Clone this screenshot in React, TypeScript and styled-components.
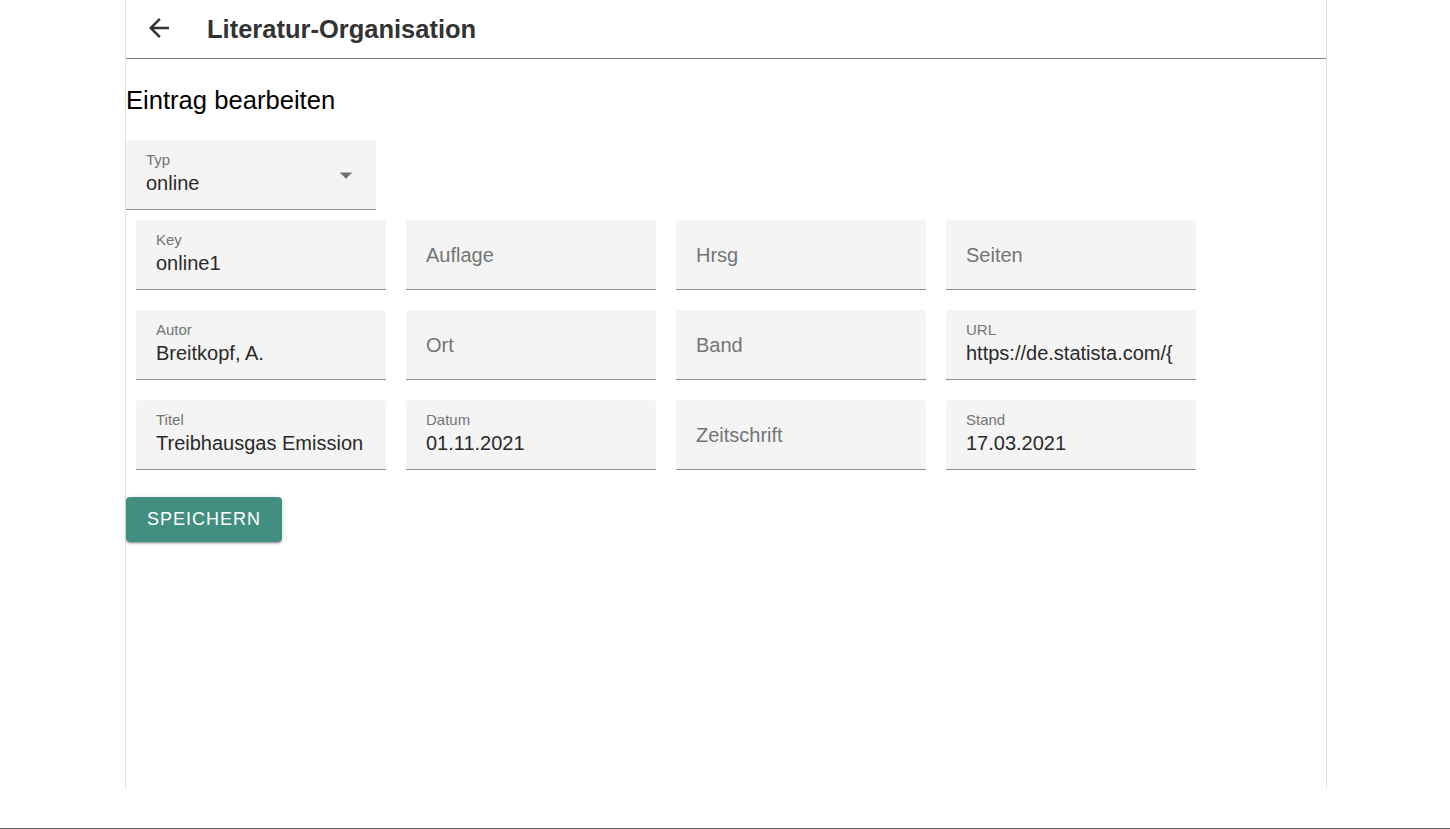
import React from "react";
import styled, { createGlobalStyle } from "styled-components";

const Global = createGlobalStyle`
  html, body { margin: 0; padding: 0; background: #ffffff; }
  body { font-family: "Liberation Sans", Arial, Helvetica, sans-serif; color: #212121; }
  * { box-sizing: border-box; }
`;

const Screen = styled.div`
  height: 829px;
  display: flex;
  flex-direction: column;
  overflow: hidden;
`;

const Frame = styled.div`
  width: 1202px;
  height: 788px;
  margin-left: 125px;
  border-left: 1px solid #e0e0e0;
  border-right: 1px solid #e0e0e0;
  display: flex;
  flex-direction: column;
`;

const Spacer = styled.div`
  flex: 1;
`;

const BottomRule = styled.div`
  height: 1px;
  background: #5f5f5f;
`;

const Header = styled.header`
  height: 59px;
  border-bottom: 1px solid #7f7f7f;
  display: flex;
  align-items: center;
  padding-left: 6px;
`;

const IconButton = styled.button`
  width: 54px;
  height: 54px;
  border: none;
  background: transparent;
  padding: 0;
  display: flex;
  align-items: center;
  justify-content: center;
  color: #333333;
  cursor: pointer;
  margin-top: -2px;
`;

const Title = styled.h1`
  margin: 0 0 0 21px;
  font-size: 25.5px;
  line-height: 58px;
  font-weight: 700;
  color: #333333;
`;

const Content = styled.main`
  display: flex;
  flex-direction: column;
  align-items: flex-start;
`;

const Heading = styled.h2`
  margin: 26px 0 25px 0;
  font-size: 25.6px;
  line-height: 30px;
  font-weight: 400;
  color: #000000;
`;

const FieldBox = styled.div<{ $filled: boolean }>`
  position: relative;
  width: 250px;
  height: 70px;
  background: #f4f4f4;
  border-radius: 4px 4px 0 0;
  border-bottom: 1px solid #8e8e8e;
  padding: ${(p) => (p.$filled ? "11px 20px 0 20px" : "2px 20px 0 20px")};
  display: flex;
  flex-direction: column;
  justify-content: ${(p) => (p.$filled ? "flex-start" : "center")};
  overflow: hidden;
`;

const Label = styled.span`
  font-size: 15px;
  line-height: 17px;
  color: #757575;
  white-space: nowrap;
`;

const Placeholder = styled.span`
  font-size: 20px;
  line-height: 23px;
  color: #757575;
  white-space: nowrap;
`;

const Value = styled.span`
  margin-top: 4px;
  font-size: 20px;
  line-height: 23px;
  color: #2a2a2a;
  white-space: nowrap;
  overflow: hidden;
  max-width: 210px;
`;

const DropIcon = styled.svg`
  position: absolute;
  right: 15px;
  top: 20px;
  width: 30px;
  height: 30px;
  fill: #707070;
`;

const Grid = styled.div`
  display: grid;
  grid-template-columns: repeat(4, 250px);
  gap: 20px;
  padding: 10px;
`;

const SaveButton = styled.button`
  margin-top: 17px;
  width: 156px;
  height: 45px;
  border: none;
  border-radius: 4px;
  background: #428f82;
  color: #ffffff;
  font-family: "Liberation Sans", Arial, sans-serif;
  font-size: 18px;
  font-weight: 500;
  letter-spacing: 1px;
  text-transform: uppercase;
  box-shadow: 0 3px 1px -2px rgba(0, 0, 0, 0.2), 0 2px 2px 0 rgba(0, 0, 0, 0.14),
    0 1px 5px 0 rgba(0, 0, 0, 0.12);
  cursor: pointer;
`;

type FieldProps = { label: string; value?: string; select?: boolean };

function Field({ label, value, select }: FieldProps) {
  const filled = !!value;
  return (
    <FieldBox $filled={filled}>
      {filled ? (
        <>
          <Label>{label}</Label>
          <Value>{value}</Value>
        </>
      ) : (
        <Placeholder>{label}</Placeholder>
      )}
      {select && (
        <DropIcon viewBox="0 0 24 24">
          <path d="M7 10l5 5 5-5z" />
        </DropIcon>
      )}
    </FieldBox>
  );
}

const fields: FieldProps[] = [
  { label: "Key", value: "online1" },
  { label: "Auflage" },
  { label: "Hrsg" },
  { label: "Seiten" },
  { label: "Autor", value: "Breitkopf, A." },
  { label: "Ort" },
  { label: "Band" },
  { label: "URL", value: "https://de.statista.com/{" },
  { label: "Titel", value: "Treibhausgas Emission" },
  { label: "Datum", value: "01.11.2021" },
  { label: "Zeitschrift" },
  { label: "Stand", value: "17.03.2021" },
];

export default function App() {
  return (
    <>
      <Global />
      <Screen>
        <Frame>
          <Header>
            <IconButton aria-label="zurück">
              <svg width="30" height="30" viewBox="0 0 24 24" fill="currentColor">
                <path d="M20 11H7.83l5.59-5.59L12 4l-8 8 8 8 1.41-1.41L7.83 13H20v-2z" />
              </svg>
            </IconButton>
            <Title>Literatur-Organisation</Title>
          </Header>
          <Content>
            <Heading>Eintrag bearbeiten</Heading>
            <Field label="Typ" value="online" select />
            <Grid>
              {fields.map((f) => (
                <Field key={f.label} {...f} />
              ))}
            </Grid>
            <SaveButton>Speichern</SaveButton>
          </Content>
        </Frame>
        <Spacer />
        <BottomRule />
      </Screen>
    </>
  );
}
